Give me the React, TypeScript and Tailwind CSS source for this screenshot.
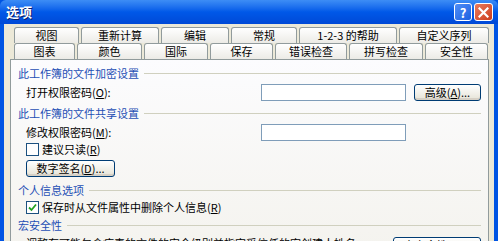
import React from "react";

const font = { fontFamily: '"Noto Sans CJK SC", "Noto Sans", sans-serif' };

function Tab({ label, w, selected }: { label: string; w: number; selected?: boolean }) {
  if (selected) {
    return (
      <div
        className="relative z-10 -mb-[2px] -mt-[3px] flex h-[19px] items-center justify-center rounded-t-[3px] border border-b-0 border-[#919b9c] border-t-[#e68b2c] bg-[#fcfcfe] shadow-[inset_0_2px_0_#ffc83c]"
        style={{ width: w }}
      >
        <span className="border border-dotted border-black px-[6px] leading-[13px]">{label}</span>
      </div>
    );
  }
  return (
    <div
      className="flex h-[16px] items-center justify-center rounded-t-[3px] border border-b-0 border-[#919b9c] bg-gradient-to-b from-white to-[#ecebe6]"
      style={{ width: w }}
    >
      {label}
    </div>
  );
}

function GroupHeader({ label }: { label: string }) {
  return (
    <div className="flex h-[16px] items-center gap-[5px] pl-[7px] pr-[7px]">
      <span className="whitespace-nowrap text-[#1e4fb5]">{label}</span>
      <div className="h-px flex-1 bg-[#d0d0bf]" />
    </div>
  );
}

function XpButton({ children, w }: { children: React.ReactNode; w: number }) {
  return (
    <div
      className="flex h-[17px] items-center justify-center rounded-[3px] border border-[#003c74] bg-gradient-to-b from-white to-[#e6e3d6] text-black shadow-[inset_0_-2px_0_#d6d0c5]"
      style={{ width: w }}
    >
      {children}
    </div>
  );
}

function Input() {
  return <div className="h-[17px] w-[145px] border border-[#7f9db9] bg-white" />;
}

export default function App() {
  return (
    <div className="h-[241px] w-[498px] overflow-hidden bg-[#0054e3] text-[11px] text-black" style={font}>
      {/* title bar */}
      <div className="flex h-[24px] items-center justify-between rounded-t-[6px] bg-gradient-to-b from-[#3d8df5] via-[#0058e8] to-[#0049d6] pl-[6px] pr-[5px]">
        <span className="text-[13px] font-bold text-white [text-shadow:1px_1px_0_#0a1e6a]">选项</span>
        <div className="flex gap-[2px]">
          <div className="flex h-[18px] w-[18px] items-center justify-center rounded-[3px] border border-white bg-gradient-to-br from-[#4f8ef7] to-[#1c5fe0] text-[13px] font-bold leading-none text-white">
            ?
          </div>
          <div className="flex h-[18px] w-[19px] items-center justify-center rounded-[3px] border border-white bg-gradient-to-br from-[#e97a5c] to-[#cc3a17]">
            <svg width="11" height="11" viewBox="0 0 11 11">
              <path d="M1.5 1.5 L9.5 9.5 M9.5 1.5 L1.5 9.5" stroke="white" strokeWidth="2.2" strokeLinecap="square" />
            </svg>
          </div>
        </div>
      </div>
      {/* body */}
      <div className="mx-[4px] flex h-[217px] flex-col bg-[#ece9d8] pl-[6px] pr-[5px] pt-[3px]">
        {/* tabs */}
        <div className="flex flex-col pl-[4px]">
          <div className="flex gap-[2px]">
            <Tab label="视图" w={65} />
            <Tab label="重新计算" w={78} />
            <Tab label="编辑" w={68} />
            <Tab label="常规" w={66} />
            <Tab label="1-2-3 的帮助" w={98} />
            <Tab label="自定义序列" w={90} />
          </div>
          <div className="flex items-end gap-[2px]">
            <Tab label="图表" w={61} />
            <Tab label="颜色" w={65} />
            <Tab label="国际" w={64} />
            <Tab label="保存" w={63} />
            <Tab label="错误检查" w={72} />
            <Tab label="拼写检查" w={74} />
            <Tab label="安全性" w={63} />
          </div>
        </div>
        {/* panel */}
        <div className="flex-1 border border-b-0 border-[#919b9c] bg-gradient-to-b from-[#fcfcfe] to-[#f4f3ee] pt-[5px]">
          <GroupHeader label="此工作簿的文件加密设置" />
          <div className="mt-[3px] flex h-[17px] items-center pl-[15px] pr-[7px]">
            <span className="flex-1">打开权限密码(<u>O</u>):</span>
            <Input />
            <div className="ml-[8px]">
              <XpButton w={67}>
                高级(<u>A</u>)...
              </XpButton>
            </div>
          </div>
          <div className="mt-[4px]">
            <GroupHeader label="此工作簿的文件共享设置" />
          </div>
          <div className="mt-[3px] flex h-[17px] items-center pl-[15px] pr-[7px]">
            <span className="w-[235px]">修改权限密码(<u>M</u>):</span>
            <Input />
          </div>
          <div className="mt-[1px] flex h-[15px] items-center gap-[3px] pl-[15px]">
            <div className="h-[13px] w-[13px] border border-[#1c5180] bg-white" />
            <span>建议只读(<u>R</u>)</span>
          </div>
          <div className="mt-[3px] pl-[15px]">
            <XpButton w={89}>
              数字签名(<u>D</u>)...
            </XpButton>
          </div>
          <div className="mt-[5px]">
            <GroupHeader label="个人信息选项" />
          </div>
          <div className="mt-[2px] flex h-[15px] items-center gap-[3px] pl-[15px]">
            <div className="flex h-[13px] w-[13px] items-center justify-center border border-[#1c5180] bg-white">
              <svg width="9" height="9" viewBox="0 0 9 9">
                <path d="M1 4.5 L3.5 7 L8 1.5" stroke="#21a121" strokeWidth="1.8" fill="none" />
              </svg>
            </div>
            <span>保存时从文件属性中删除个人信息(<u>R</u>)</span>
          </div>
          <div className="mt-[2px]">
            <GroupHeader label="宏安全性" />
          </div>
          <div className="mt-[2px] flex items-start pl-[15px] pr-[7px]">
            <span className="flex-1 whitespace-nowrap">调整有可能包含病毒的文件的安全级别并指定受信任的宏创建人姓名。</span>
            <div className="mt-[2px]">
              <XpButton w={88}>宏安全性(<u>S</u>)...</XpButton>
            </div>
          </div>
        </div>
      </div>
    </div>
  );
}
